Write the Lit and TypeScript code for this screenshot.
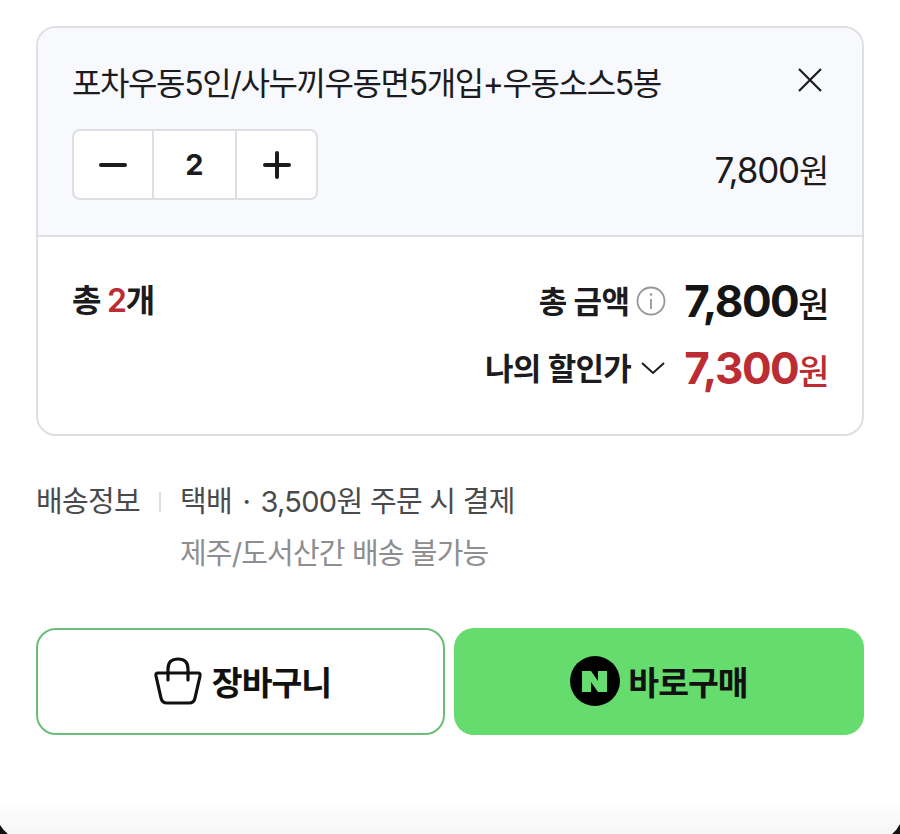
import { LitElement, html, css } from "lit";
import { customElement } from "lit/decorators.js";

@customElement("app-root")
export class AppRoot extends LitElement {
  static styles = css`
    :host {
      display: block;
      width: 900px;
      height: 834px;
      overflow: hidden;
      position: relative;
      background: #fff;
      font-family: Inter, "Noto Sans CJK KR", sans-serif;
      color: #1c1c1e;
    }
    .page {
      padding: 26px 36px 0;
    }
    .card {
      border: 2px solid #dedfe2;
      border-radius: 20px;
      overflow: hidden;
      height: 410px;
      box-sizing: border-box;
    }
    .item {
      background: #f8f9fd;
      height: 209px;
      box-sizing: border-box;
      padding: 34px 34px 0;
      border-bottom: 2px solid #dedfe2;
    }
    .item-head {
      display: flex;
      justify-content: space-between;
      align-items: flex-start;
      height: 67px;
    }
    .item-name {
      font-size: 32px;
      line-height: 44px;
      letter-spacing: -1.4px;
    }
    .close {
      width: 28px;
      height: 28px;
      margin: 4px 4px 0 0;
    }
    .item-foot {
      display: flex;
      justify-content: space-between;
      align-items: center;
    }
    .stepper {
      display: grid;
      grid-template-columns: 78px 83px 81px;
      width: 246px;
      height: 71px;
      box-sizing: border-box;
      background: #fff;
      border: 2px solid #dedfe2;
      border-radius: 8px;
    }
    .step {
      display: flex;
      align-items: center;
      justify-content: center;
      font-size: 29px;
      font-weight: 700;
    }
    .step + .step {
      border-left: 2px solid #dedfe2;
    }
    .line-price {
      font-size: 35px;
      letter-spacing: -1.2px;
      line-height: 44px;
      margin-top: 12px;
    }
    .won {
      font-size: 0.94em;
    }
    .summary {
      display: flex;
      justify-content: space-between;
      padding: 40px 34px 0;
    }
    .count {
      font-size: 32px;
      font-weight: 600;
      line-height: 48px;
      letter-spacing: -1.2px;
    }
    .red {
      color: #bb2c33;
    }
    .totals {
      display: flex;
      flex-direction: column;
      gap: 19px;
    }
    .row {
      display: flex;
      justify-content: flex-end;
      align-items: center;
      height: 48px;
    }
    .label {
      font-size: 31px;
      font-weight: 600;
      letter-spacing: -0.7px;
      margin-bottom: 4px;
    }
    .amount {
      font-size: 44px;
      font-weight: 700;
      letter-spacing: -1.5px;
      margin: 4px 0 0 18px;
      line-height: 48px;
      color: #151515;
    }
    .amount.red {
      color: #bb2c33;
    }
    .amount .won {
      font-size: 34px;
      font-weight: 500;
    }
    .info {
      width: 30px;
      height: 30px;
      margin-left: 7px;
    }
    .chev {
      width: 26px;
      height: 26px;
      margin-left: 9px;
    }
    .shipping {
      display: grid;
      grid-template-columns: 144px auto;
      row-gap: 8px;
      margin-top: 44px;
      font-size: 29px;
      line-height: 44px;
      letter-spacing: -0.7px;
      color: #4a4a4c;
    }
    .ship-label {
      position: relative;
    }
    .ship-label::after {
      content: "";
      position: absolute;
      left: 123px;
      top: 12px;
      width: 2px;
      height: 20px;
      background: #dedfe2;
    }
    .dot {
      margin: 0 3px;
    }
    .note {
      color: #8e8e90;
      letter-spacing: -0.85px;
    }
    .buttons {
      display: grid;
      grid-template-columns: 409px 410px;
      gap: 9px;
      margin-top: 52px;
    }
    .btn {
      height: 107px;
      box-sizing: border-box;
      padding-bottom: 2px;
      border-radius: 20px;
      display: flex;
      align-items: center;
      justify-content: center;
      font-size: 33.5px;
      font-weight: 700;
      letter-spacing: -1px;
      color: #111;
    }
    .cart {
      border: 2px solid #6cbd78;
      background: #fff;
      gap: 10px;
      padding-left: 4px;
    }
    .buy {
      background: #66db6e;
      gap: 8px;
    }
    .fade {
      position: absolute;
      left: 0;
      right: 0;
      bottom: 0;
      height: 34px;
      background: linear-gradient(#fff, #f6f6f6);
    }
    .corner {
      position: absolute;
      bottom: 0;
      width: 10px;
      height: 10px;
    }
    .corner.left {
      left: 0;
    }
    .corner.right {
      right: 0;
    }
  `;

  render() {
    return html`
      <div class="page">
        <div class="card">
          <div class="item">
            <div class="item-head">
              <div class="item-name">포차우동5인/사누끼우동면5개입+우동소스5봉</div>
              <svg class="close" viewBox="0 0 28 28" fill="none" stroke="#1c1c1e" stroke-width="2.2">
                <path d="M3 3 L25 25 M25 3 L3 25" />
              </svg>
            </div>
            <div class="item-foot">
              <div class="stepper">
                <div class="step">
                  <svg width="28" height="28" viewBox="0 0 28 28" stroke="#1c1c1e" stroke-width="4" stroke-linecap="round">
                    <path d="M2 14 H26" />
                  </svg>
                </div>
                <div class="step">2</div>
                <div class="step">
                  <svg width="28" height="28" viewBox="0 0 28 28" stroke="#1c1c1e" stroke-width="4" stroke-linecap="round">
                    <path d="M2 14 H26 M14 2 V26" />
                  </svg>
                </div>
              </div>
              <div class="line-price">7,800<span class="won">원</span></div>
            </div>
          </div>
          <div class="summary">
            <div class="count">총 <span class="red">2</span>개</div>
            <div class="totals">
              <div class="row">
                <span class="label">총 금액</span>
                <svg class="info" viewBox="0 0 30 30" fill="none" stroke="#97979a" stroke-width="1.8">
                  <circle cx="15" cy="15" r="13.500" />
                  <path d="M15 13 V23" />
                  <circle cx="15" cy="8.500" r="1.300" fill="#97979a" stroke="none" />
                </svg>
                <span class="amount">7,800<span class="won">원</span></span>
              </div>
              <div class="row">
                <span class="label">나의 할인가</span>
                <svg class="chev" viewBox="0 0 26 26" fill="none" stroke="#1c1c1e" stroke-width="2">
                  <path d="M2 8 L13 18 L24 8" />
                </svg>
                <span class="amount red">7,300<span class="won">원</span></span>
              </div>
            </div>
          </div>
        </div>
        <div class="shipping">
          <div class="ship-label">배송정보</div>
          <div>택배 <span class="dot">·</span> 3,500원 주문 시 결제</div>
          <div></div>
          <div class="note">제주/도서산간 배송 불가능</div>
        </div>
        <div class="buttons">
          <div class="btn cart">
            <svg width="48" height="48" viewBox="0 0 48 48" fill="none" stroke="#111" stroke-width="3.2" stroke-linecap="round" stroke-linejoin="round">
              <path d="M4 16 H44 Q46.500 16 46 19 L41 41 Q40 46 35 46 H13 Q8 46 7 41 L2 19 Q1.500 16 4 16 Z" />
              <path d="M14 23 V12 Q14 2 24 2 Q34 2 34 12 V23" />
            </svg>
            장바구니
          </div>
          <div class="btn buy">
            <svg width="50" height="50" viewBox="0 0 50 50">
              <circle cx="25" cy="25" r="25" fill="#000" />
              <path d="M12 15 H21 L28 25 V15 H37 V36 H28 L21 26 V36 H12 Z" fill="#66db6e" />
            </svg>
            바로구매
          </div>
        </div>
      </div>
      <div class="fade"></div>
      <svg class="corner left" viewBox="0 0 10 10"><path d="M0 1 Q3 6 8 10 H0 Z" fill="#111" /></svg>
      <svg class="corner right" viewBox="0 0 10 10"><path d="M10 0 Q7 6 2 10 H10 Z" fill="#111" /></svg>
    `;
  }
}
